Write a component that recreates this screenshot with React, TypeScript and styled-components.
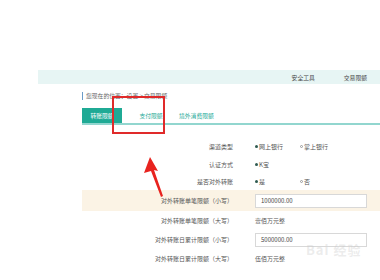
import React from "react";
import styled, { createGlobalStyle } from "styled-components";

const GlobalStyle = createGlobalStyle`
  html, body {
    margin: 0;
    padding: 0;
    background: #ffffff;
    font-family: "Noto Sans CJK SC", "Liberation Sans", sans-serif;
    color: #555;
  }
`;

const Page = styled.main`
  position: relative;
  width: 380px;
  height: 280px;
  overflow: hidden;
  padding-top: 70px;
  box-sizing: border-box;
`;

const TopBar = styled.nav`
  margin-left: 38px;
  height: 14px;
  background: #e7f5f4;
  display: flex;
  justify-content: flex-end;
  align-items: center;
  gap: 29px;
  padding-right: 13px;
  font-size: 5.8px;
  color: #444;
`;

const Content = styled.section`
  margin-left: 82px;
  padding-top: 8px;
`;

const Crumb = styled.div`
  border-left: 1px solid #6a9cc8;
  padding-left: 3px;
  height: 8px;
  line-height: 8px;
  font-size: 5.8px;
  color: #666;
`;

const Tabs = styled.div`
  margin-top: 8px;
  display: flex;
  align-items: stretch;
  height: 15px;
  border-bottom: 2px solid #92d6cf;
`;

const Tab = styled.div<{ $active?: boolean }>`
  display: flex;
  align-items: center;
  justify-content: center;
  padding: 0 ${(p) => (p.$active ? "8px" : "6px")};
  margin-right: ${(p) => (p.$active ? "8px" : "1px")};
  font-size: 5.8px;
  background: ${(p) => (p.$active ? "#1faa95" : "transparent")};
  color: ${(p) => (p.$active ? "#ffffff" : "#24a896")};
  min-width: ${(p) => (p.$active ? "24px" : "30px")};
`;

const Form = styled.div`
  margin-top: 12px;
  display: flex;
  flex-direction: column;
`;

const Row = styled.div<{ $hl?: boolean; $h?: number }>`
  display: grid;
  grid-template-columns: 151px 1fr;
  column-gap: 22px;
  align-items: center;
  height: ${(p) => p.$h ?? 18}px;
  background: ${(p) => (p.$hl ? "#fbf3e5" : "transparent")};
  font-size: 6px;
`;

const Label = styled.div`
  text-align: right;
  color: #555;
  white-space: nowrap;
`;

const Value = styled.div`
  display: flex;
  align-items: center;
  color: #555;
`;

const Radio = styled.span<{ $on?: boolean; $gap?: number }>`
  display: inline-flex;
  align-items: center;
  gap: 1px;
  width: ${(p) => p.$gap ?? 45}px;
  &::before {
    content: "";
    width: 3px;
    height: 3px;
    border-radius: 50%;
    box-sizing: border-box;
    background: ${(p) => (p.$on ? "#2f5a50" : "transparent")};
    border: ${(p) => (p.$on ? "none" : "0.6px solid #999")};
  }
`;

const Input = styled.div`
  width: 112px;
  height: 14px;
  box-sizing: border-box;
  border: 1px solid #d8d8d8;
  background: #fff;
  display: flex;
  align-items: center;
  padding-left: 5px;
  font-size: 6px;
  color: #444;
`;

const Highlight = styled.div`
  position: absolute;
  left: 112px;
  top: 96px;
  width: 53px;
  height: 38px;
  box-sizing: border-box;
  border: 2.5px solid #e02a2a;
`;

const Arrow = styled.svg`
  position: absolute;
  left: 140px;
  top: 154px;
`;

const Watermark = styled.div`
  position: absolute;
  left: 306px;
  top: 240px;
  font-size: 13px;
  font-weight: 700;
  color: rgba(200, 200, 200, 0.35);
  letter-spacing: 1px;
`;

export default function App() {
  return (
    <>
      <GlobalStyle />
      <Page>
        <TopBar>
          <span>安全工具</span>
          <span>交易限额</span>
        </TopBar>
        <Content>
          <Crumb>您现在的位置：设置 &gt; 交易限额</Crumb>
          <Tabs>
            <Tab $active>转账限额</Tab>
            <Tab>支付限额</Tab>
            <Tab>境外消费限额</Tab>
          </Tabs>
          <Form>
            <Row>
              <Label>渠道类型</Label>
              <Value>
                <Radio $on>网上银行</Radio>
                <Radio>掌上银行</Radio>
              </Value>
            </Row>
            <Row>
              <Label>认证方式</Label>
              <Value>
                <Radio $on>K宝</Radio>
              </Value>
            </Row>
            <Row $h={17}>
              <Label>是否对外转账</Label>
              <Value>
                <Radio $on>是</Radio>
                <Radio>否</Radio>
              </Value>
            </Row>
            <Row $hl $h={21}>
              <Label>对外转账单笔限额（小写）</Label>
              <Value>
                <Input>1000000.00</Input>
              </Value>
            </Row>
            <Row $h={19}>
              <Label>对外转账单笔限额（大写）</Label>
              <Value>壹佰万元整</Value>
            </Row>
            <Row $h={19}>
              <Label>对外转账日累计限额（小写）</Label>
              <Value>
                <Input>5000000.00</Input>
              </Value>
            </Row>
            <Row $h={19}>
              <Label>对外转账日累计限额（大写）</Label>
              <Value>伍佰万元整</Value>
            </Row>
          </Form>
        </Content>
        <Highlight />
        <Arrow width="30" height="46" viewBox="0 0 30 46">
          <polygon points="10,3 18,17 14,16 23,42 21,43 11,17 4,19" fill="#e8231f" />
        </Arrow>
        <Watermark>Bai 经验</Watermark>
      </Page>
    </>
  );
}
